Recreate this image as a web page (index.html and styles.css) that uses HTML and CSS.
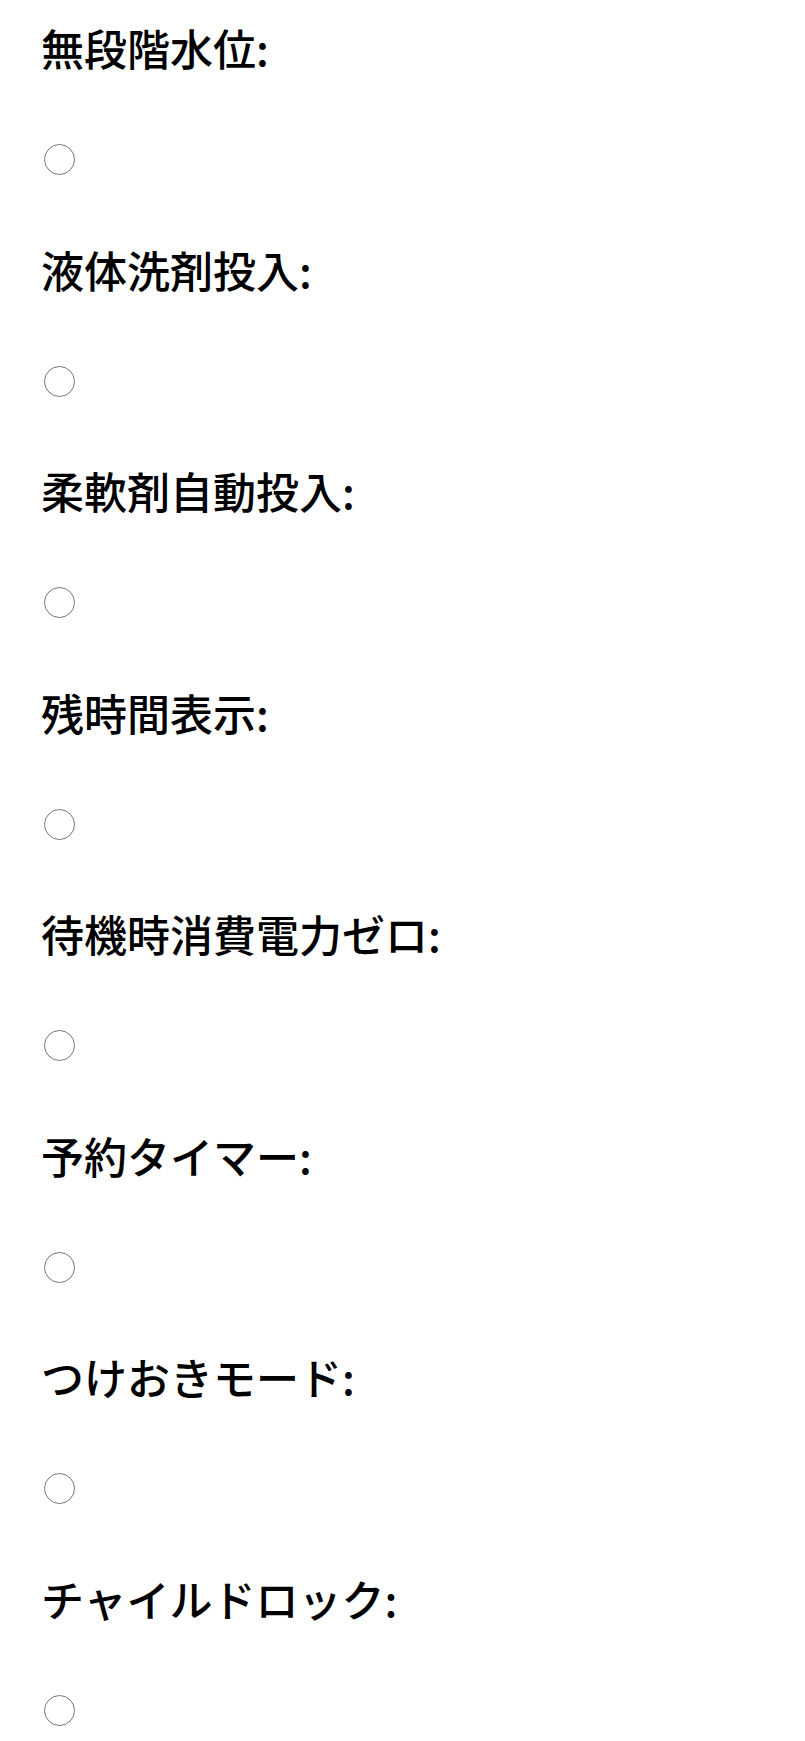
FILE: index.html
```html
<!DOCTYPE html>
<html lang="ja">
<head>
    <meta charset="UTF-8">
    <title>洗濯機の機能</title>
    <link rel="stylesheet" href="styles.css">
</head>
<body>
<form class="features">
    <div class="field">
        <h3>無段階水位:</h3>
        <input type="radio" name="f1">
    </div>
    <div class="field">
        <h3>液体洗剤投入:</h3>
        <input type="radio" name="f2">
    </div>
    <div class="field">
        <h3>柔軟剤自動投入:</h3>
        <input type="radio" name="f3">
    </div>
    <div class="field">
        <h3>残時間表示:</h3>
        <input type="radio" name="f4">
    </div>
    <div class="field">
        <h3>待機時消費電力ゼロ:</h3>
        <input type="radio" name="f5">
    </div>
    <div class="field">
        <h3>予約タイマー:</h3>
        <input type="radio" name="f6">
    </div>
    <div class="field">
        <h3>つけおきモード:</h3>
        <input type="radio" name="f7">
    </div>
    <div class="field">
        <h3>チャイルドロック:</h3>
        <input type="radio" name="f8">
    </div>
</form>
</body>
</html>
```

FILE: styles.css
```css
*{margin:0;padding:0;box-sizing:border-box}
body{
    background:#fff;
    color:#000;
    font-family:"Noto Sans CJK JP","Noto Sans",sans-serif;
}
.features{
    display:flex;
    flex-direction:column;
    padding:16px 0 0 41px;
}
.field{
    display:flex;
    flex-direction:column;
    align-items:flex-start;
    padding-bottom:62.5px;
}
.field h3{
    font-size:43px;
    font-weight:500;
    line-height:62px;
}
/*ラジオボタン*/
.field input[type=radio]{
    appearance:none;
    -webkit-appearance:none;
    width:31px;
    height:31px;
    margin:66px 0 0 3px;
    border:1.5px solid #767676;
    border-radius:50%;
    background:#fff;
}
```
